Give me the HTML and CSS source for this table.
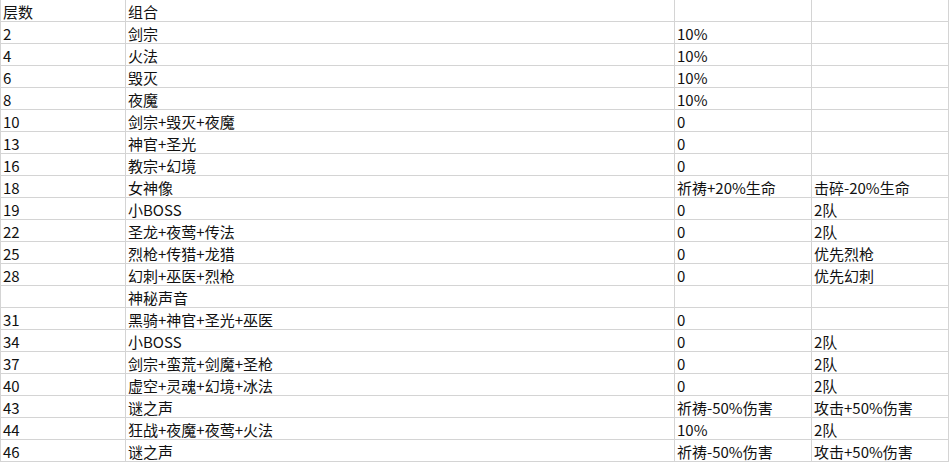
FILE: index.html
```html
<!DOCTYPE html>
<html lang="zh-CN">
<head>
<meta charset="utf-8">
<title>层数</title>
<link rel="stylesheet" href="styles.css">
</head>
<body>
<div class="sheet">
<div class="c">层数</div><div class="c">组合</div><div class="c"></div><div class="c"></div>
<div class="c">2</div><div class="c">剑宗</div><div class="c">10%</div><div class="c"></div>
<div class="c">4</div><div class="c">火法</div><div class="c">10%</div><div class="c"></div>
<div class="c">6</div><div class="c">毁灭</div><div class="c">10%</div><div class="c"></div>
<div class="c">8</div><div class="c">夜魔</div><div class="c">10%</div><div class="c"></div>
<div class="c">10</div><div class="c">剑宗+毁灭+夜魔</div><div class="c">0</div><div class="c"></div>
<div class="c">13</div><div class="c">神官+圣光</div><div class="c">0</div><div class="c"></div>
<div class="c">16</div><div class="c">教宗+幻境</div><div class="c">0</div><div class="c"></div>
<div class="c">18</div><div class="c">女神像</div><div class="c">祈祷+20%生命</div><div class="c">击碎-20%生命</div>
<div class="c">19</div><div class="c">小BOSS</div><div class="c">0</div><div class="c">2队</div>
<div class="c">22</div><div class="c">圣龙+夜莺+传法</div><div class="c">0</div><div class="c">2队</div>
<div class="c">25</div><div class="c">烈枪+传猎+龙猎</div><div class="c">0</div><div class="c">优先烈枪</div>
<div class="c">28</div><div class="c">幻刺+巫医+烈枪</div><div class="c">0</div><div class="c">优先幻刺</div>
<div class="c"></div><div class="c">神秘声音</div><div class="c"></div><div class="c"></div>
<div class="c">31</div><div class="c">黑骑+神官+圣光+巫医</div><div class="c">0</div><div class="c"></div>
<div class="c">34</div><div class="c">小BOSS</div><div class="c">0</div><div class="c">2队</div>
<div class="c">37</div><div class="c">剑宗+蛮荒+剑魔+圣枪</div><div class="c">0</div><div class="c">2队</div>
<div class="c">40</div><div class="c">虚空+灵魂+幻境+冰法</div><div class="c">0</div><div class="c">2队</div>
<div class="c">43</div><div class="c">谜之声</div><div class="c">祈祷-50%伤害</div><div class="c">攻击+50%伤害</div>
<div class="c">44</div><div class="c">狂战+夜魔+夜莺+火法</div><div class="c">10%</div><div class="c">2队</div>
<div class="c">46</div><div class="c">谜之声</div><div class="c">祈祷-50%伤害</div><div class="c">攻击+50%伤害</div>
</div>
</body>
</html>
```
FILE: styles.css
```css
html, body {
  margin: 0;
  padding: 0;
  background: #ffffff;
}
.sheet {
  width: 949px;
  box-sizing: border-box;
  display: grid;
  grid-template-columns: 124px 548px 136px 136px;
  grid-auto-rows: 21px;
  gap: 1px;
  padding: 0 1px 1px 1px;
  background: #d4d4d4;
  font-family: "Noto Sans CJK SC", "Noto Sans", sans-serif;
  font-size: 15px;
  color: #111111;
}
.c {
  background: #ffffff;
  line-height: 21px;
  padding: 1px 0 0 2px;
  box-sizing: border-box;
  white-space: nowrap;
  overflow: hidden;
}
```
